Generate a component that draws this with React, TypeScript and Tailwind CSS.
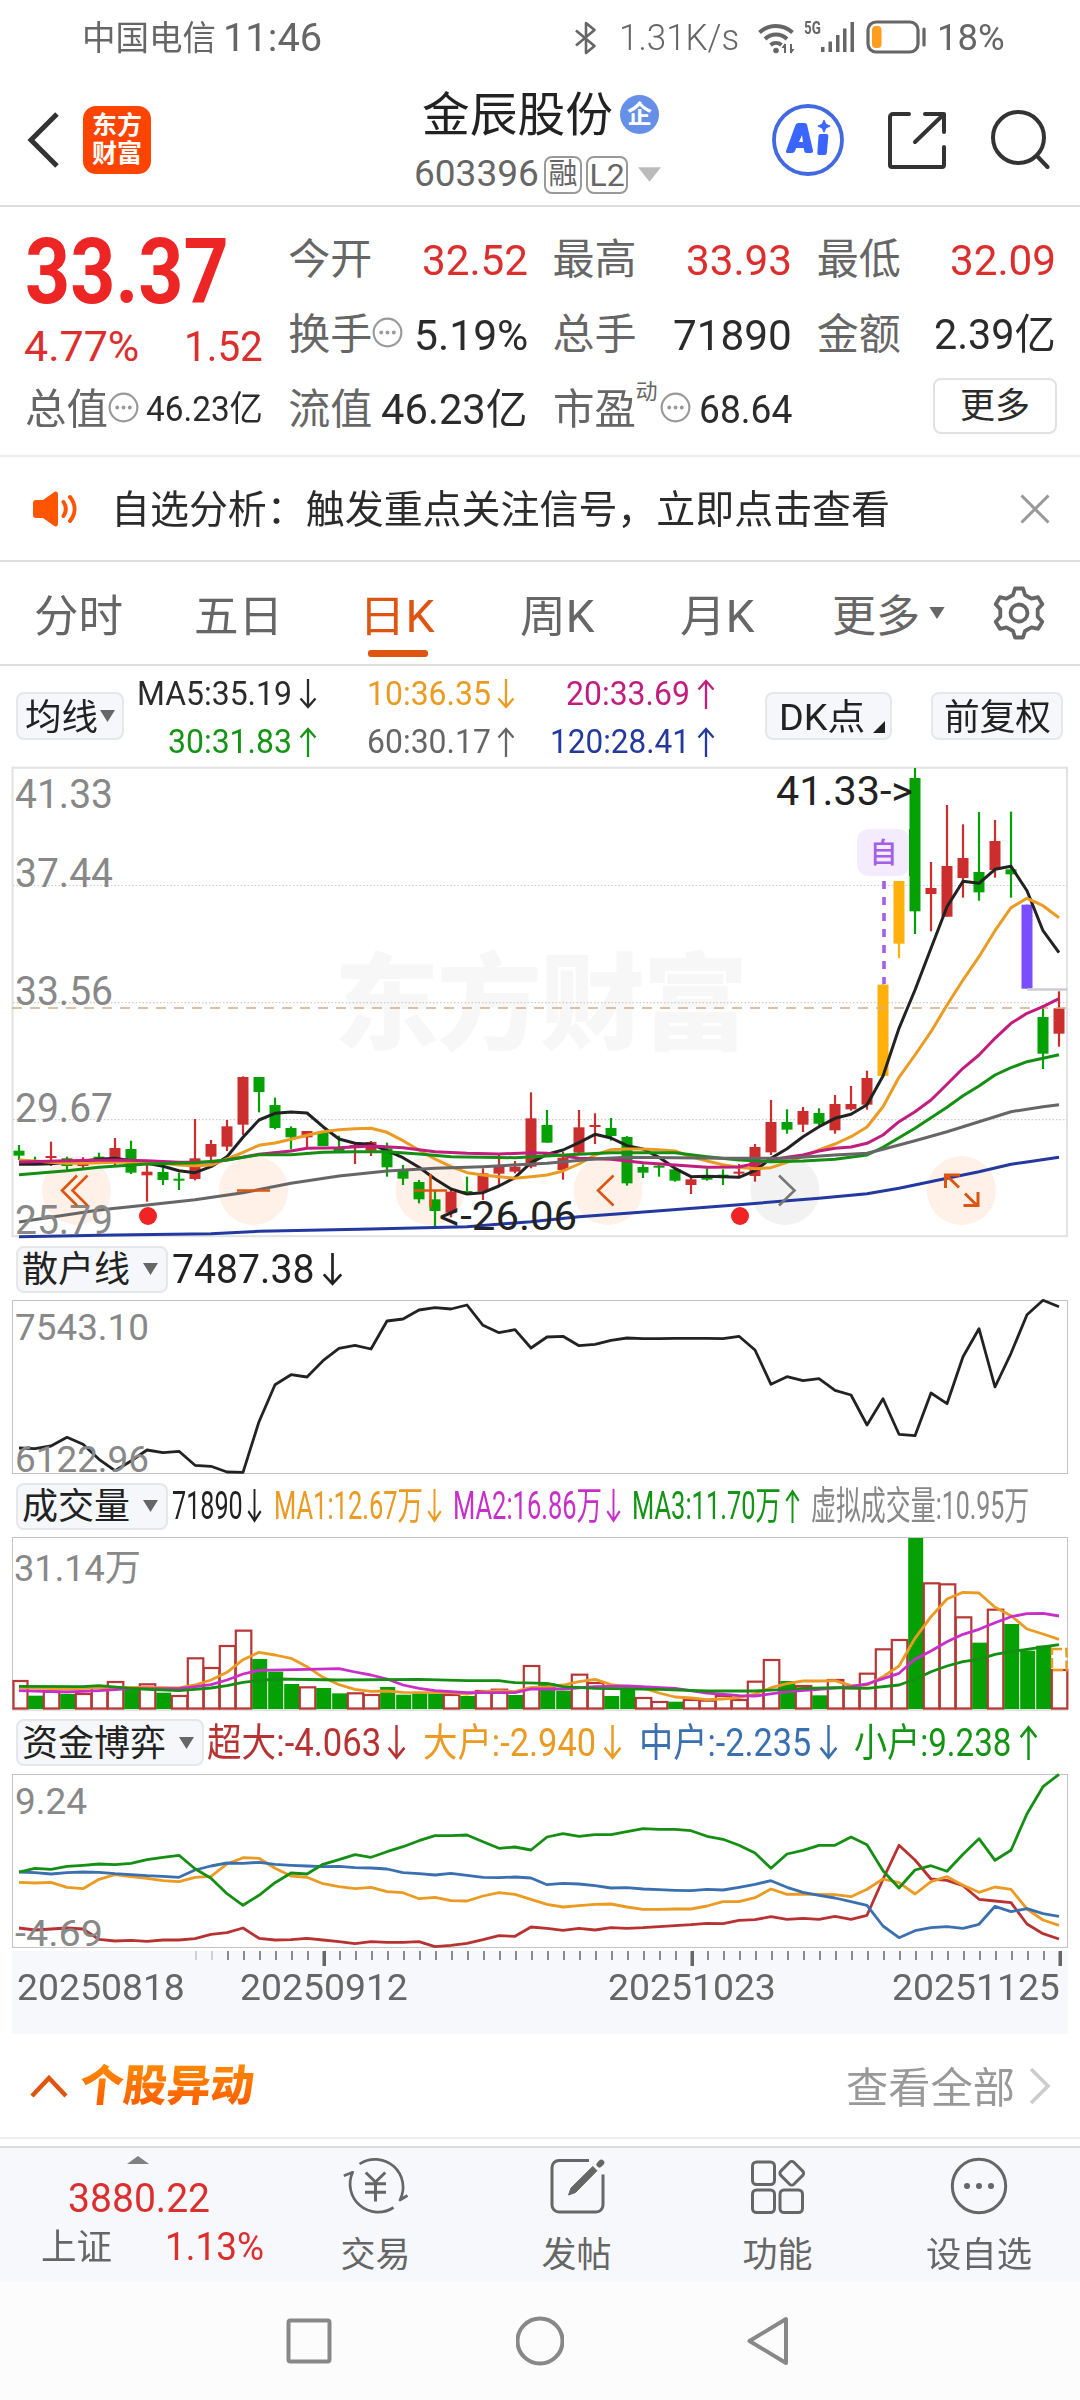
import { useLayoutEffect, useRef, useState } from 'react';
import type { ReactNode } from 'react';

/* ---------- text that is condensed or stretched to the width of its box ---------- */
function Fit({ className, children }: { className: string; children: ReactNode }) {
  const box = useRef<HTMLDivElement>(null);
  const text = useRef<HTMLSpanElement>(null);
  const [scale, setScale] = useState(1);
  useLayoutEffect(() => {
    if (box.current && text.current && text.current.offsetWidth > 0) {
      setScale(box.current.clientWidth / text.current.offsetWidth);
    }
  }, [children]);
  return (
    <div ref={box} className={`flex shrink-0 ${className}`}>
      <span ref={text} className="block origin-left whitespace-nowrap leading-[1.15]" style={{ transform: `scaleX(${scale})` }}>
        {children}
      </span>
    </div>
  );
}

/* ---------- chart helpers ---------- */
const X0 = 19;
const STEP = 16;
const xAt = (i: number) => X0 + i * STEP;
const third = (v: number) => v / 3;
type Pair = [number, number];

const series = (ys: number[]) => ys.map((v, i) => `${xAt(i)},${third(v).toFixed(1)}`).join(' ');
const sparse = (ps: Pair[]) => ps.map(([i, v]) => `${xAt(i)},${third(v).toFixed(1)}`).join(' ');

function Line({ points, color, width = 3 }: { points: string; color: string; width?: number }) {
  return <polyline points={points} fill="none" stroke={color} strokeWidth={width} strokeLinejoin="round" />;
}

function Label({ x, y, w, size, fill = '#888888', children }: { x: number; y: number; w: number; size: number; fill?: string; children: string }) {
  return (
    <text x={x} y={y} fontSize={size} fill={fill} textLength={w} lengthAdjust="spacingAndGlyphs">
      {children}
    </text>
  );
}

const RED = '#cc2e2e';
const GREEN = '#04a004';
const candleColor: Record<string, string> = { r: RED, g: GREEN, o: '#ffb00b', p: '#7a4dff' };

/* kind, high, body top, body bottom, low */
const candles: [string, number, number, number, number][] = [
  ['g', 1155, 1172, 1187, 1200], ['g', 1190, 1200, 1206, 1212], ['r', 1145, 1188, 1194, 1218], ['g', 1190, 1195, 1218, 1230],
  ['r', 1192, 1205, 1218, 1225], ['g', 1178, 1190, 1195, 1200], ['r', 1134, 1164, 1195, 1215], ['g', 1142, 1167, 1238, 1242],
  ['r', 1210, 1235, 1246, 1325], ['g', 1220, 1236, 1260, 1275], ['g', 1238, 1256, 1262, 1290], ['r', 1077, 1195, 1257, 1261],
  ['r', 1140, 1152, 1190, 1200], ['r', 1080, 1099, 1160, 1173], ['r', 949, 951, 1094, 1125], ['g', 951, 951, 996, 1057],
  ['g', 1013, 1035, 1104, 1108], ['g', 1099, 1104, 1132, 1168], ['r', 1113, 1113, 1132, 1162], ['g', 1115, 1115, 1158, 1158],
  ['g', 1127, 1165, 1175, 1178], ['r', 1150, 1155, 1160, 1212], ['r', 1143, 1146, 1172, 1188], ['g', 1148, 1165, 1222, 1250],
  ['g', 1215, 1228, 1256, 1275], ['g', 1260, 1266, 1318, 1330], ['g', 1290, 1318, 1353, 1398], ['r', 1290, 1295, 1358, 1372],
  ['g', 1250, 1293, 1298, 1300], ['r', 1225, 1240, 1295, 1320], ['r', 1185, 1218, 1241, 1275], ['r', 1203, 1220, 1235, 1240],
  ['r', 997, 1075, 1220, 1225], ['g', 1050, 1095, 1148, 1148], ['r', 1175, 1193, 1230, 1259], ['r', 1050, 1102, 1178, 1180],
  ['r', 1060, 1095, 1101, 1152], ['g', 1074, 1104, 1128, 1142], ['g', 1128, 1131, 1270, 1277], ['g', 1213, 1221, 1238, 1254],
  ['g', 1210, 1217, 1222, 1250], ['g', 1225, 1228, 1262, 1265], ['r', 1250, 1258, 1275, 1302], ['g', 1225, 1253, 1258, 1262],
  ['g', 1228, 1244, 1248, 1275], ['r', 1212, 1235, 1239, 1250], ['r', 1152, 1161, 1248, 1265], ['r', 1020, 1086, 1177, 1185],
  ['g', 1048, 1086, 1109, 1121], ['r', 1041, 1053, 1094, 1116], ['g', 1045, 1059, 1091, 1095], ['r', 1005, 1032, 1111, 1121],
  ['r', 978, 1032, 1048, 1052], ['r', 932, 954, 1034, 1049], ['o', 672, 674, 948, 948], ['o', 363, 363, 551, 594],
  ['g', 24, 54, 454, 522], ['r', 306, 384, 402, 514], ['r', 135, 318, 470, 470], ['r', 193, 294, 354, 413],
  ['g', 156, 336, 397, 422], ['r', 180, 243, 330, 353], ['g', 155, 328, 343, 413], ['p', 434, 434, 686, 686],
  ['g', 735, 771, 881, 927], ['r', 694, 745, 821, 860],
];

const ma5 = [
  1213, 1213, 1211, 1207, 1203, 1198, 1195, 1202, 1210, 1219, 1232, 1238, 1220, 1190, 1132, 1080, 1060, 1056, 1059, 1100, 1137, 1150,
  1153, 1172, 1193, 1222, 1257, 1287, 1302, 1298, 1278, 1253, 1208, 1183, 1170, 1148, 1123, 1134, 1157, 1167, 1192, 1225, 1250, 1249,
  1250, 1252, 1232, 1195, 1166, 1130, 1100, 1075, 1063, 1034, 948, 805, 690, 565, 440, 364, 370, 328, 319, 392, 512, 578,
];
const ma10 = [
  1200, 1203, 1207, 1210, 1210, 1208, 1207, 1206, 1207, 1210, 1215, 1217, 1215, 1197, 1177, 1156, 1149, 1138, 1126, 1115, 1109, 1106,
  1105, 1117, 1142, 1170, 1197, 1220, 1238, 1245, 1250, 1255, 1250, 1245, 1233, 1212, 1185, 1169, 1167, 1167, 1169, 1173, 1190, 1203,
  1214, 1222, 1226, 1223, 1207, 1190, 1170, 1152, 1130, 1101, 1040, 952, 885, 815, 735, 660, 590, 512, 443, 415, 437, 473,
];
const ma20: Pair[] = [
  [0, 1206], [3, 1202], [6, 1200], [8, 1202], [10, 1207], [12, 1206], [13, 1200], [15, 1183], [17, 1173], [18, 1165], [20, 1163],
  [22, 1158], [24, 1163], [26, 1175], [28, 1180], [30, 1182], [32, 1178], [33, 1180], [34, 1187], [35, 1195], [37, 1198], [39, 1208],
  [41, 1215], [43, 1222], [45, 1221], [47, 1200], [48, 1192], [49, 1185], [50, 1173], [51, 1165], [52, 1161], [53, 1150], [54, 1125],
  [55, 1085], [56, 1055], [57, 1020], [58, 973], [59, 925], [60, 885], [61, 835], [62, 790], [63, 760], [64, 740], [65, 716],
];
const ma30: Pair[] = [
  [0, 1244], [3, 1232], [5, 1222], [8, 1212], [11, 1208], [13, 1200], [15, 1184], [17, 1184], [19, 1177], [21, 1175], [23, 1175],
  [25, 1182], [27, 1190], [29, 1192], [31, 1193], [33, 1188], [35, 1183], [37, 1178], [39, 1178], [41, 1178], [43, 1190], [45, 1200],
  [47, 1205], [49, 1203], [51, 1198], [53, 1185], [54, 1162], [55, 1133], [56, 1105], [57, 1073], [58, 1042], [59, 1007], [60, 978],
  [61, 945], [62, 923], [63, 905], [64, 895], [65, 884],
];
const ma60: Pair[] = [
  [0, 1386], [5, 1350], [8, 1335], [11, 1319], [14, 1298], [17, 1270], [20, 1248], [23, 1233], [26, 1225], [29, 1220], [33, 1210],
  [36, 1197], [38, 1192], [44, 1195], [48, 1195], [51, 1185], [53, 1180], [54, 1168], [56, 1142], [58, 1115], [60, 1085], [62, 1055],
  [64, 1040], [65, 1034],
];
const ma120: Pair[] = [
  [0, 1430], [6, 1425], [12, 1421], [15, 1414], [22, 1407], [28, 1400], [32, 1385], [35, 1370], [38, 1360], [45, 1334], [50, 1315],
  [53, 1301], [55, 1285], [58, 1255], [60, 1235], [62, 1213], [63, 1206], [65, 1192],
];

/* retail-investor line */
const retail = [
  654, 656, 648, 622, 643, 688, 722, 693, 660, 668, 664, 706, 709, 726, 727, 575, 464, 434, 441, 392, 355, 346, 357, 273, 267, 240, 233,
  237, 225, 286, 308, 299, 354, 321, 319, 347, 343, 331, 324, 326, 326, 325, 325, 325, 326, 319, 360, 463, 440, 452, 446, 481, 495, 585,
  506, 613, 617, 489, 521, 380, 296, 471, 370, 254, 211, 230,
];

/* volume: r = rising (outlined) day, g = falling (solid) day; value is the bar's top */
const volume: [string, number][] = [
  ['r', 273], ['g', 317], ['r', 305], ['g', 312], ['r', 312], ['r', 292], ['r', 276], ['g', 300], ['r', 283], ['g', 308], ['r', 318],
  ['r', 205], ['r', 234], ['r', 168], ['r', 122], ['g', 207], ['g', 245], ['g', 282], ['r', 292], ['g', 294], ['g', 310], ['r', 310],
  ['r', 315], ['g', 291], ['g', 314], ['g', 310], ['g', 312], ['r', 315], ['g', 318], ['r', 303], ['r', 299], ['g', 315], ['r', 228],
  ['g', 280], ['g', 302], ['r', 254], ['r', 279], ['g', 318], ['g', 297], ['r', 324], ['r', 336], ['g', 335], ['r', 330], ['r', 332],
  ['r', 318], ['r', 330], ['r', 275], ['r', 210], ['g', 273], ['r', 288], ['g', 316], ['r', 270], ['r', 295], ['r', 251], ['r', 178],
  ['r', 150], ['g', -156], ['r', -20], ['r', -17], ['r', 82], ['g', 158], ['r', 59], ['g', 102], ['g', 182], ['g', 167], ['r', 240],
];
const vol1: Pair[] = [
  [0, 293], [3, 297], [5, 293], [8, 292], [10, 294], [11, 285], [12, 270], [13, 247], [14, 209], [15, 187], [16, 195], [17, 205],
  [18, 230], [19, 262], [20, 284], [21, 298], [22, 304], [23, 303], [24, 307], [27, 308], [28, 312], [29, 305], [30, 302], [31, 305],
  [32, 292], [33, 291], [34, 285], [35, 275], [36, 268], [37, 284], [38, 290], [39, 294], [40, 309], [41, 321], [42, 324], [43, 329],
  [44, 327], [45, 323], [46, 312], [47, 293], [48, 281], [49, 273], [50, 273], [51, 272], [52, 287], [53, 285], [54, 260], [55, 228],
  [56, 145], [57, 80], [58, 27], [59, 7], [60, 9], [61, 52], [62, 77], [63, 117], [64, 132], [65, 148],
];
const vol2: Pair[] = [
  [0, 302], [3, 306], [5, 302], [7, 296], [10, 296], [12, 284], [13, 270], [14, 252], [15, 241], [18, 238], [20, 236], [21, 246],
  [22, 255], [23, 267], [24, 285], [25, 295], [26, 302], [28, 308], [31, 308], [32, 297], [34, 297], [36, 290], [38, 288], [41, 295],
  [43, 309], [45, 317], [46, 318], [48, 305], [50, 298], [52, 290], [53, 282], [54, 266], [55, 250], [56, 208], [57, 183], [58, 155],
  [59, 133], [60, 118], [61, 98], [62, 80], [63, 71], [64, 70], [65, 78],
];
const vol3: Pair[] = [
  [0, 289], [4, 290], [5, 287], [7, 295], [8, 298], [10, 302], [12, 294], [13, 287], [14, 277], [16, 267], [20, 270], [25, 268],
  [28, 272], [30, 272], [31, 278], [33, 280], [34, 290], [36, 295], [40, 298], [43, 303], [46, 303], [49, 295], [51, 293], [53, 295],
  [55, 285], [56, 268], [57, 245], [58, 228], [59, 215], [60, 208], [61, 193], [62, 185], [63, 178], [64, 171], [65, 164],
];

/* capital flow */
const flowSmall = [
  846, 835, 838, 829, 826, 822, 824, 820, 809, 802, 796, 836, 865, 911, 946, 916, 878, 849, 852, 823, 809, 794, 802, 785, 770, 752, 737,
  737, 735, 755, 775, 771, 780, 741, 731, 739, 734, 734, 725, 716, 718, 718, 722, 739, 748, 766, 789, 835, 792, 781, 766, 766, 741, 764,
  842, 894, 840, 827, 844, 793, 746, 811, 781, 671, 590, 553,
];
const flowMid = [
  846, 848, 852, 848, 846, 847, 851, 854, 857, 859, 862, 840, 828, 819, 820, 817, 823, 826, 828, 830, 829, 833, 834, 837, 848, 851, 855,
  850, 856, 862, 863, 861, 864, 884, 880, 882, 887, 894, 893, 897, 899, 901, 902, 898, 900, 892, 883, 872, 892, 907, 916, 924, 935, 946,
  1008, 1043, 1022, 1013, 1010, 1015, 1003, 949, 965, 956, 971, 979,
];
const flowLarge = [
  877, 879, 877, 892, 896, 868, 854, 860, 865, 872, 875, 862, 859, 822, 803, 805, 835, 858, 862, 881, 890, 896, 892, 905, 908, 926, 922,
  932, 933, 918, 908, 913, 928, 943, 951, 947, 943, 942, 951, 958, 958, 957, 957, 948, 935, 935, 923, 897, 913, 912, 913, 914, 920, 898,
  867, 878, 912, 875, 860, 886, 907, 891, 898, 957, 990, 1006,
];
const flowSuper = [
  1014, 1020, 1017, 1014, 1017, 1048, 1053, 1051, 1054, 1050, 1050, 1046, 1033, 1028, 1014, 1045, 1050, 1049, 1045, 1050, 1055, 1061,
  1055, 1057, 1057, 1055, 1070, 1066, 1060, 1049, 1037, 1039, 1011, 1015, 1021, 1015, 1020, 1013, 1015, 1013, 1010, 1007, 1004, 1000,
  1001, 991, 989, 980, 988, 985, 988, 979, 988, 976, 868, 766, 810, 867, 871, 887, 928, 933, 938, 1002, 1031, 1047,
];

/* ---------- small drawings ---------- */
function Arrow({ up = false, className }: { up?: boolean; className: string }) {
  return (
    <svg viewBox="0 0 18 30" preserveAspectRatio="none" className={`shrink-0 ${up ? '' : 'rotate-180'} ${className}`} fill="none" stroke="currentColor" strokeWidth="2.3">
      <path d="M9 30V2M1.500 10.500 9 2l7.500 8.500" />
    </svg>
  );
}

function Caret({ className }: { className: string }) {
  return (
    <svg viewBox="0 0 14 11" className={`shrink-0 ${className}`} fill="currentColor">
      <path d="M0 0h14L7 11z" />
    </svg>
  );
}

function Dots({ className = '' }: { className?: string }) {
  return (
    <svg viewBox="0 0 32 32" className={`h-[31px] w-[31px] shrink-0 ${className}`} fill="none" stroke="#999999" strokeWidth="2.200">
      <circle cx="16" cy="16" r="14.300" />
      <g fill="#999999" stroke="none">
        <circle cx="9.500" cy="16" r="2" />
        <circle cx="16" cy="16" r="2" />
        <circle cx="22.500" cy="16" r="2" />
      </g>
    </svg>
  );
}

function StatusBar() {
  return (
    <div className="flex h-[76px] items-center pl-[82px] text-[#666666]">
      <Fit className="mt-[2px] w-[134px] text-[34px]">中国电信</Fit>
      <Fit className="ml-[7px] mt-[1px] w-[99px] text-[39px]">11:46</Fit>
      <svg viewBox="0 0 24 34" className="ml-[252px] h-[34px] w-[24px]" fill="none" stroke="currentColor" strokeWidth="2.600" strokeLinejoin="round">
        <path d="M2 9.500 20.500 25 12 32V2l8.500 7L2 24.500" />
      </svg>
      <Fit className="ml-[21px] mt-[1px] w-[120px] text-[37px] font-light">1.31K/s</Fit>
      <svg viewBox="0 0 38 34" className="ml-[19px] h-[34px] w-[38px]" fill="none" stroke="currentColor" strokeWidth="4">
        <path d="M1.500 11.500a24 24 0 0 1 33 0M7 18a16 16 0 0 1 22 0M12.500 24a8.500 8.500 0 0 1 11 0" />
        <circle cx="18" cy="29.500" r="2.800" fill="currentColor" stroke="none" />
        <path d="M27 32v-9M33 23v9" strokeWidth="2" />
        <path d="m23.500 27 3.500-5v5zM36.500 28 33 33v-5z" fill="currentColor" stroke="none" />
      </svg>
      <Fit className="mb-[20px] ml-[8px] w-[17px] text-[19px] font-bold">5G</Fit>
      <svg viewBox="0 0 34 32" className="mt-[-2px] h-[32px] w-[34px]" fill="currentColor">
        <path d="M0 26h3.500v5H0zM7.500 20.500H11V31H7.500zM15 14h3.500v17H15zM22 7.500h3.500V31H22zM29.500 1H33v30h-3.500z" />
      </svg>
      <svg viewBox="0 0 60 34" className="ml-[11px] mt-[-3px] h-[34px] w-[60px]" fill="none" stroke="currentColor" strokeWidth="3.200">
        <rect x="2" y="2" width="50" height="30" rx="8" />
        <rect x="6" y="6" width="9.500" height="22" rx="4" fill="#ff9d1e" stroke="none" />
        <path d="M58 9v16" strokeLinecap="round" />
      </svg>
      <Fit className="ml-[11px] mt-[1px] w-[68px] text-[37px]">18%</Fit>
    </div>
  );
}

function Header() {
  return (
    <div className="flex h-[131px] items-center border-b-2 border-[#dddddd] pb-[2px] pl-[26px]">
      <svg viewBox="0 0 34 56" className="h-[56px] w-[34px]" fill="none" stroke="#333333" strokeWidth="5">
        <path d="M31 2 5 28l26 26" />
      </svg>
      <div className="ml-[23px] flex h-[68px] w-[68px] flex-col items-center justify-center rounded-[13px] bg-[#ff4400] text-[25px] font-bold leading-[28px] text-white">
        <span>东方</span>
        <span>财富</span>
      </div>
      <div className="ml-[263px] mt-[4px] flex w-[250px] flex-col">
        <div className="flex h-[50px] items-center pl-[8px]">
          <Fit className="mt-[2px] w-[191px] text-[47px] text-[#222222]">金辰股份</Fit>
          <span className="ml-[7px] flex h-[39px] w-[39px] items-center justify-center rounded-full bg-[#6690e8] text-[25px] font-bold leading-none text-white">企</span>
        </div>
        <div className="mt-[16px] flex h-[39px] items-center text-[#666666]">
          <Fit className="w-[125px] text-[37px]">603396</Fit>
          <span className="ml-[5px] flex h-[38px] w-[38px] items-center justify-center rounded-[8px] border-2 border-[#999999] text-[29px] leading-none">融</span>
          <span className="ml-[4px] flex h-[38px] w-[42px] items-center justify-center rounded-[8px] border-2 border-[#999999] text-[32px] leading-none">L2</span>
          <svg viewBox="0 0 24 15" className="ml-[10px] h-[15px] w-[23px]" fill="#bbbbbb">
            <path d="M0 0h24L12 15z" />
          </svg>
        </div>
      </div>
      <svg viewBox="0 0 72 72" className="ml-[108px] h-[72px] w-[72px]" fill="#3a66ff">
        <circle cx="36" cy="36" r="34" fill="none" stroke="#4169e1" strokeWidth="3.800" />
        <path fillRule="evenodd" d="M14 47l9.500-26q.8-2 3-2h6q2.200 0 2.600 2L41 46.500q.3 2.500-2 2.500h-4.500q-2 0-2.300-2l-.5-3h-7.500l-1.200 3q-.8 2-3 2h-4q-2.500 0-2-2zM27 38h4l-1-7z" />
        <path d="M48.500 30h6q2 0 1.800 2l-1.500 17q-.2 2-2.200 2h-5.500q-2 0-1.800-2l1.200-17q.2-2 2-2z" />
        <path d="m52 16 1.900 4.200 4.200 1.900-4.200 1.900-1.900 4.200-1.900-4.200-4.200-1.900 4.200-1.900z" stroke="#3a66ff" strokeLinejoin="round" />
      </svg>
      <svg viewBox="0 0 60 60" className="ml-[43px] h-[60px] w-[60px]" fill="none" stroke="#333333" strokeWidth="4" strokeLinecap="round" strokeLinejoin="round">
        <path d="M22 4H6a3 3 0 0 0-3 3v48a2 2 0 0 0 2 2h50a2 2 0 0 0 2-2V37M38 4h19v18M56 5 28 32" />
      </svg>
      <svg viewBox="0 0 60 60" className="ml-[43px] h-[60px] w-[60px]" fill="none" stroke="#333333" strokeWidth="4" strokeLinecap="round">
        <circle cx="28.500" cy="27.500" r="25.500" />
        <path d="m47 46 10.500 11" />
      </svg>
    </div>
  );
}

function Quote() {
  return (
    <div className="grid h-[250px] grid-cols-4 gap-x-[26px] border-b-2 border-[#eeeeee] pl-[25px] pr-[24px] pt-[16px] text-[42px] text-[#2b2b2b]">
      <div className="flex h-[225px] flex-col">
        <Fit className="mt-[-2px] w-[204px] text-[90px] font-bold text-[#ee2525]">33.37</Fit>
        <div className="mt-[-3px] flex justify-between text-[43px] text-[#dd2e2e]">
          <Fit className="ml-[-1px] w-[115px]">4.77%</Fit>
          <Fit className="w-[79px]">1.52</Fit>
        </div>
        <div className="mb-0 mt-auto flex h-[75px] items-center">
          <Fit className="w-[83px] text-[#666666]">总值</Fit>
          <Dots className="mb-[6px]" />
          <Fit className="ml-auto w-[117px] text-[35px]">46.23亿</Fit>
        </div>
      </div>

      <div className="flex flex-col">
        <div className="flex h-[75px] items-center justify-between">
          <Fit className="ml-[-1px] w-[84px] text-[#666666]">今开</Fit>
          <Fit className="w-[106px] text-[43px] text-[#dd2e2e]">32.52</Fit>
        </div>
        <div className="flex h-[75px] items-center">
          <Fit className="ml-[-1px] w-[84px] text-[#666666]">换手</Fit>
          <Dots className="mb-[6px]" />
          <Fit className="ml-auto w-[114px] text-[43px]">5.19%</Fit>
        </div>
        <div className="flex h-[75px] items-center justify-between">
          <Fit className="ml-[-1px] w-[84px] text-[#666666]">流值</Fit>
          <Fit className="w-[147px]">46.23亿</Fit>
        </div>
      </div>

      <div className="flex flex-col">
        <div className="flex h-[75px] items-center justify-between">
          <Fit className="ml-[-1px] w-[84px] text-[#666666]">最高</Fit>
          <Fit className="w-[106px] text-[43px] text-[#dd2e2e]">33.93</Fit>
        </div>
        <div className="flex h-[75px] items-center justify-between">
          <Fit className="ml-[-1px] w-[84px] text-[#666666]">总手</Fit>
          <Fit className="w-[119px] text-[43px]">71890</Fit>
        </div>
        <div className="flex h-[75px] items-center">
          <Fit className="ml-[-1px] w-[83px] text-[#666666]">市盈</Fit>
          <span className="mb-[38px] text-[22px] leading-none text-[#666666]">动</span>
          <Dots className="mb-[6px] ml-[2px]" />
          <Fit className="ml-auto w-[93px] text-[38px]">68.64</Fit>
        </div>
      </div>

      <div className="flex flex-col">
        <div className="flex h-[75px] items-center justify-between">
          <Fit className="ml-[-1px] w-[84px] text-[#666666]">最低</Fit>
          <Fit className="w-[106px] text-[43px] text-[#dd2e2e]">32.09</Fit>
        </div>
        <div className="flex h-[75px] items-center justify-between">
          <Fit className="ml-[-1px] w-[84px] text-[#666666]">金额</Fit>
          <Fit className="w-[122px]">2.39亿</Fit>
        </div>
        <div className="flex h-[75px] items-center justify-end">
          <div className="mb-[9px] mr-[-1px] flex h-[56px] w-[124px] items-center justify-center rounded-[8px] border-2 border-[#e2e2e2] pt-[1px] text-[35px] leading-none">更多</div>
        </div>
      </div>
    </div>
  );
}

function Notice() {
  return (
    <div className="flex h-[105px] items-center border-b-2 border-[#dddddd] pl-[33px] pr-[30px]">
      <svg viewBox="0 0 46 38" className="h-[38px] w-[46px]">
        <path d="M3 10h7L21 2.200c2-1.400 4-.4 4 2v29.600c0 2.400-2 3.400-4 2L10 28H3c-2 0-3-1-3-3V13c0-2 1-3 3-3z" fill="#ff5500" />
        <path d="M30.500 12c3 4.500 3 9.500 0 14M37 7c6 7.500 6 16.500 0 24" fill="none" stroke="#ff5500" strokeWidth="4" strokeLinecap="round" />
      </svg>
      <Fit className="ml-[32px] mt-[3px] w-[779px] text-[39px] text-[#2b2b2b]">自选分析：触发重点关注信号，立即点击查看</Fit>
      <svg viewBox="0 0 30 30" className="ml-auto h-[30px] w-[30px]" fill="none" stroke="#999999" strokeWidth="3">
        <path d="m1.500 1.500 27 27m0-27-27 27" />
      </svg>
    </div>
  );
}

function PeriodTabs() {
  return (
    <div className="flex h-[104px] items-center border-b-2 border-[#dddddd] pl-[34px] text-[44px] text-[#666666]">
      <Fit className="mt-[8px] w-[89px]">分时</Fit>
      <Fit className="ml-[71px] mt-[8px] w-[89px]">五日</Fit>
      <div className="relative ml-[76px] flex h-full items-center text-[#dd5511]">
        <Fit className="mt-[8px] w-[76px]">日K</Fit>
        <span className="absolute bottom-[7px] left-[9px] h-[7px] w-[60px] rounded-[3px] bg-[#dd5511]" />
      </div>
      <Fit className="ml-[85px] mt-[8px] w-[75px]">周K</Fit>
      <Fit className="ml-[85px] mt-[8px] w-[75px]">月K</Fit>
      <Fit className="ml-[77px] mt-[8px] w-[88px]">更多</Fit>
      <Caret className="ml-[9px] h-[12px] w-[16px]" />
      <svg viewBox="0 0 52 54" className="ml-[48px] h-[54px] w-[52px]" fill="none" stroke="#666666" strokeWidth="3.800" strokeLinejoin="round">
        <path d="M22 2.500h8l2 6.500 6.500 3.700 6.600-1.500 4.200 7-4.600 5.100v7.400l4.600 5.100-4.200 7-6.600-1.500L32 45l-2 6.500h-8L20 45l-6.500-3.700-6.600 1.500-4.200-7 4.600-5.100v-7.400l-4.600-5.100 4.200-7 6.600 1.500L20 9z" />
        <circle cx="26" cy="27" r="8.500" />
      </svg>
    </div>
  );
}

function IndicatorBar() {
  return (
    <div className="flex h-[94px] items-center pl-[16px] pt-[10px]">
      <div className="mb-[4px] flex h-[48px] w-[108px] items-center rounded-[8px] border-2 border-[#e6e7eb] bg-[#f6f7fa] pl-[7px] text-[#222222]">
        <Fit className="mt-[5px] w-[73px] text-[36px]">均线</Fit>
        <Caret className="ml-[2px] h-[12px] w-[15px] text-[#666666]" />
      </div>
      <div className="ml-[13px] grid h-[96px] grid-cols-[180px_198px_200px] grid-rows-2 text-[34px]">
        <div className="flex items-center justify-end text-[#2b2b2b]">
          <Fit className="w-[155px]">MA5:35.19</Fit>
          <Arrow className="ml-[7px] h-[30px] w-[18px]" />
        </div>
        <div className="flex items-center justify-end text-[#eb9a22]">
          <Fit className="w-[124px]">10:36.35</Fit>
          <Arrow className="ml-[6px] h-[30px] w-[18px]" />
        </div>
        <div className="flex items-center justify-end text-[#c21c7c]">
          <Fit className="w-[124px]">20:33.69</Fit>
          <Arrow up className="ml-[7px] h-[30px] w-[18px]" />
        </div>
        <div className="flex items-center justify-end text-[#149414]">
          <Fit className="w-[124px]">30:31.83</Fit>
          <Arrow up className="ml-[7px] h-[30px] w-[18px]" />
        </div>
        <div className="flex items-center justify-end text-[#666666]">
          <Fit className="w-[124px]">60:30.17</Fit>
          <Arrow up className="ml-[6px] h-[30px] w-[18px]" />
        </div>
        <div className="flex items-center justify-end text-[#24399f]">
          <Fit className="w-[140px]">120:28.41</Fit>
          <Arrow up className="ml-[7px] h-[30px] w-[18px]" />
        </div>
      </div>
      <div className="relative mb-[4px] ml-[50px] flex h-[48px] w-[127px] items-center rounded-[8px] border-2 border-[#e6e7eb] bg-[#f6f7fa] pl-[12px] text-[#222222]">
        <Fit className="mt-[5px] w-[86px] text-[36px]">DK点</Fit>
        <svg viewBox="0 0 12 12" className="absolute bottom-[5px] right-[5px] h-[12px] w-[12px]" fill="#222222">
          <path d="M12 0v12H0z" />
        </svg>
      </div>
      <div className="mb-[4px] ml-[39px] flex h-[48px] w-[132px] items-center justify-center rounded-[8px] border-2 border-[#e6e7eb] bg-[#f6f7fa] text-[#222222]">
        <Fit className="mt-[5px] w-[107px] text-[36px]">前复权</Fit>
      </div>
    </div>
  );
}

const roundButtons = [76.5, 253.5, 430, 608, 785, 961.5];

function CandleChart() {
  return (
    <svg viewBox="0 0 1080 481" className="block h-[481px] w-full overflow-visible">
      <text x="334" y="281" fontSize="105" fontWeight="900" fill="#f7f7f7" textLength="414">东方财富</text>
      <rect x="12.500" y="7.700" width="1054.500" height="468.500" fill="none" stroke="#e2e2e2" strokeWidth="2" />
      <g stroke="#cccccc" strokeWidth="1.200" strokeDasharray="1.500 2">
        <path d="M13 125.500h1054M13 242.700h1054M13 359.700h1054" />
      </g>
      <Label x={15} y={47.500} w={98} size={40}>41.33</Label>
      <Label x={15} y={126.500} w={98} size={40}>37.44</Label>
      <Label x={15} y={244.500} w={98} size={40}>33.56</Label>
      <Label x={15} y={361.500} w={98} size={40}>29.67</Label>
      {roundButtons.map((cx, i) => (
        <circle key={cx} cx={cx} cy="430.500" r="34.500" fill={i === 4 ? '#f2f2f2' : '#fff0e8'} />
      ))}
      {candles.map(([kind, high, top, bottom, low], i) => (
        <g key={i} fill={candleColor[kind]}>
          <rect x={xAt(i) - 1.1} y={third(high)} width="2.200" height={third(low - high)} />
          <rect x={xAt(i) - 5.5} y={third(top)} width="11" height={Math.max(2, third(bottom - top))} />
        </g>
      ))}
      <path d="M12 248h1055" stroke="#d0ae86" strokeWidth="1.700" strokeDasharray="10 8" />
      <path d="M1027 229.500h40" stroke="#ccccd4" strokeWidth="2.600" />
      <Line points={series(ma5)} color="#222222" />
      <Line points={series(ma10)} color="#eb9a22" />
      <Line points={sparse(ma20)} color="#c21c7c" />
      <Line points={sparse(ma30)} color="#148f14" />
      <Line points={sparse(ma60)} color="#666666" />
      <Line points={sparse(ma120)} color="#24399f" />
      <Label x={15} y={474} w={98} size={40}>25.79</Label>
      <Label x={776} y={45} w={137} size={40} fill="#222222">{'41.33->'}</Label>
      <Label x={439} y={469.500} w={138} size={40} fill="#222222">{'<-26.06'}</Label>
      <rect x="857" y="69" width="53" height="47" rx="12" fill="#f4ebfe" />
      <rect x="909" y="69" width="5" height="47" fill={GREEN} />
      <text x="883.500" y="103" fontSize="28" fontWeight="500" fill="#a35fe8" textAnchor="middle">自</text>
      <path d="M884 121v103" stroke="#a35fe8" strokeWidth="3.600" strokeDasharray="8 8" />
      <circle cx="148" cy="456" r="9" fill="#f02424" />
      <circle cx="740" cy="456" r="9" fill="#f02424" />
      <g fill="none" stroke="#dd5511" strokeWidth="2.600">
        <path d="m77 415.500-15 15 15 15M87.500 415.500l-15 15 15 15M237 430.500h33M414 430.500h33M430.500 414v33M613.500 415.500l-15.500 15 15.500 15" />
        <path d="M959 427.500 947 416M945.500 428v-13H960M965 433.500l11.500 11.500M978 432v13.500h-14.500" strokeWidth="3" />
      </g>
      <path d="m779 415.500 15.500 15-15.500 15" fill="none" stroke="#777777" strokeWidth="2.600" />
    </svg>
  );
}

function RetailChart() {
  return (
    <svg viewBox="0 67 1080 180" className="block h-[180px] w-full overflow-visible">
      <rect x="12.500" y="70.500" width="1055" height="173" fill="none" stroke="#c4c4c4" />
      <Line points={series(retail)} color="#222222" width={2.8} />
      <Label x={15} y={110} w={134} size={37}>7543.10</Label>
      <Label x={15} y={241.500} w={134} size={37}>6122.96</Label>
    </svg>
  );
}

function VolumeChart() {
  const base = third(357);
  return (
    <svg viewBox="0 -57 1080 180" className="block h-[180px] w-full overflow-visible">
      <rect x="12.500" y="-52.500" width="1055" height="172.500" fill="none" stroke="#c4c4c4" />
      <Label x={14} y={-9} w={127} size={37}>31.14万</Label>
      {volume.map(([kind, top], i) =>
        kind === 'g' ? (
          <rect key={i} x={xAt(i) - 6.8} y={third(top)} width="15" height={base - third(top)} fill={GREEN} />
        ) : (
          <rect key={i} x={xAt(i) - (i === 0 ? 5.5 : 7.2)} y={third(top)} width={i === 0 ? 14 : 15.500} height={base - third(top) - 0.5} fill="#ffffff" stroke="#b83636" strokeWidth="2.200" />
        ),
      )}
      <rect x="1052" y="59" width="14.500" height="21" fill="none" stroke="#eb9a22" strokeWidth="2.400" strokeDasharray="10 3" />
      <Line points={sparse(vol1)} color="#eb9a22" width={2.8} />
      <Line points={sparse(vol2)} color="#c82fc8" width={2.8} />
      <Line points={sparse(vol3)} color="#148f14" width={2.8} />
    </svg>
  );
}

function FlowChart() {
  return (
    <svg viewBox="0 181 1080 180" className="block h-[180px] w-full overflow-visible">
      <rect x="12.500" y="184.500" width="1055" height="173" fill="none" stroke="#c4c4c4" />
      <Line points={series(flowSuper)} color="#b83232" width={2.8} />
      <Line points={series(flowLarge)} color="#eb9a22" width={2.8} />
      <Line points={series(flowMid)} color="#3a70b0" width={2.8} />
      <Line points={series(flowSmall)} color="#148f14" width={2.8} />
      <Label x={15} y={224} w={72} size={37}>9.24</Label>
      <Label x={15} y={356} w={88} size={37}>-4.69</Label>
    </svg>
  );
}

function TimeAxis() {
  const ticks = Array.from({ length: 55 }, (_, k) => k + 11);
  return (
    <div className="mx-[12px] flex h-[83px] flex-col bg-[#f7f8fb]">
      <svg viewBox="12 0 1056 16" className="block h-[16px] w-full">
        {ticks.map((i) =>
          [19, 42, 65].includes(i) ? (
            <rect key={i} x={xAt(i) - 0.5} y="0" width="3.500" height="15" fill="#666666" />
          ) : (
            <rect key={i} x={xAt(i)} y="0" width="2" height="9" fill={i < 13 ? '#d0d0d2' : '#8a8a8a'} />
          ),
        )}
      </svg>
      <div className="mt-[1px] flex text-[36px] text-[#666666]">
        <Fit className="ml-[5px] w-[168px]">20250818</Fit>
        <Fit className="ml-[55px] w-[168px]">20250912</Fit>
        <Fit className="ml-[200px] w-[168px]">20251023</Fit>
        <Fit className="ml-[116px] w-[168px]">20251125</Fit>
      </div>
    </div>
  );
}

function Picker({ className, children }: { className: string; children: ReactNode }) {
  return (
    <div className={`flex h-[47px] shrink-0 items-center rounded-[8px] border-2 border-[#e6e7eb] bg-[#f6f7fa] pl-[4px] text-[36px] leading-none text-[#222222] ${className}`}>
      <span className="mt-[2px] whitespace-nowrap">{children}</span>
      <Caret className="ml-auto mr-[8px] h-[12px] w-[15px] text-[#666666]" />
    </div>
  );
}

function MoversRow() {
  return (
    <div className="flex h-[105px] items-center border-b-2 border-[#eeeeee] pl-[30px] pr-[29px]">
      <svg viewBox="0 0 38 24" className="h-[24px] w-[38px]" fill="none" stroke="#dd5511" strokeWidth="4.500">
        <path d="M2 22 19 4l17 18" />
      </svg>
      <div className="ml-[12px] mt-[3px] w-[182px] -skew-x-6 bg-gradient-to-b from-[#ff8a00] to-[#ff5500] bg-clip-text text-[43.5px] font-black leading-[48px] text-transparent">个股异动</div>
      <Fit className="ml-auto mt-[8px] w-[169px] text-[42px] text-[#999999]">查看全部</Fit>
      <svg viewBox="0 0 22 38" className="ml-[14px] h-[38px] w-[22px]" fill="none" stroke="#cccccc" strokeWidth="3.500">
        <path d="m2 2 17 17L2 36" />
      </svg>
    </div>
  );
}

function TabItem({ label, labelClass, children }: { label: string; labelClass: string; children: ReactNode }) {
  return (
    <div className="flex w-[201px] flex-col items-center">
      <svg viewBox="0 0 66 60" className="mt-[9px] h-[60px] w-[66px]" fill="none" stroke="#666666" strokeWidth="3">
        {children}
      </svg>
      <Fit className={`mt-[19px] text-[35px] ${labelClass}`}>{label}</Fit>
    </div>
  );
}

function TabBar() {
  return (
    <div className="mt-[7px] flex h-[136px] border-t-2 border-[#dcdcdc] bg-[#f7f8fb] text-[#666666]">
      <div className="flex w-[275px] flex-col">
        <svg viewBox="0 0 22 8" className="ml-[127px] mt-[8px] h-[8px] w-[22px]" fill="#808080">
          <path d="M0 8 11 0l11 8z" />
        </svg>
        <Fit className="ml-[68px] mt-[11px] w-[142px] text-[41px] text-[#dd2e2e]">3880.22</Fit>
        <div className="mt-[4px] flex items-center">
          <Fit className="ml-[41px] mt-[1px] w-[71px] text-[36px]">上证</Fit>
          <Fit className="ml-[53px] w-[99px] text-[38px] text-[#dd2e2e]">1.13%</Fit>
        </div>
      </div>
      <TabItem label="交易" labelClass="w-[70px]">
        <g strokeLinejoin="round">
          <path d="M16.500 7A28 28 0 0 1 57 43l7.500-4.500M50.500 50.500A28 28 0 0 1 9.700 15.300L.8 18.700" strokeWidth="2.700" />
        </g>
        <path d="m22.700 15.500 9.800 9.500 9.800-9.500M32.500 24v20.500M22 26.700h21M22 35.300h21" />
      </TabItem>
      <TabItem label="发帖" labelClass="w-[70px]">
        <path d="M45 3.500H15a7 7 0 0 0-7 7V48a7 7 0 0 0 7 7h37a7 7 0 0 0 7-7V17.500" />
        <path d="M24.500 38 27 31 48.800 9.500l4.200 4.200L31.500 35.500z" fill="#666666" strokeWidth="1" strokeLinejoin="round" />
        <path d="m55.500 7.500 1.800-1.800" strokeWidth="6" strokeLinecap="round" />
      </TabItem>
      <TabItem label="功能" labelClass="w-[70px]">
        <rect x="7.500" y="5" width="22" height="22.500" rx="4" />
        <rect x="7.500" y="33" width="22" height="22.500" rx="4" />
        <rect x="35" y="33" width="22.500" height="22.500" rx="4" />
        <rect x="37.500" y="7" width="18.500" height="18.500" rx="3" transform="rotate(45 46.750 16.250)" />
      </TabItem>
      <TabItem label="设自选" labelClass="w-[106px]">
        <circle cx="33" cy="29" r="26.700" />
        <g fill="#666666" stroke="none">
          <circle cx="21" cy="29" r="3" />
          <circle cx="33" cy="29" r="3" />
          <circle cx="45" cy="29" r="3" />
        </g>
      </TabItem>
    </div>
  );
}

function SystemNav() {
  return (
    <div className="flex h-[118px] items-center gap-[183px] bg-[#fcfcfc] pl-[285px]">
      <svg viewBox="0 0 48 48" className="h-[48px] w-[48px]" fill="none" stroke="#888888" strokeWidth="4">
        <rect x="3.500" y="3.500" width="41" height="41" rx="2" />
      </svg>
      <svg viewBox="0 0 48 50" className="h-[50px] w-[48px]" fill="none" stroke="#888888" strokeWidth="4">
        <circle cx="24" cy="25" r="22.500" />
      </svg>
      <svg viewBox="0 0 48 50" className="ml-[-2px] h-[50px] w-[48px]" fill="none" stroke="#888888" strokeWidth="4" strokeLinejoin="round">
        <path d="M41 3v44L4.500 25z" />
      </svg>
    </div>
  );
}

export default function App() {
  return (
    <div className="flex h-[2400px] w-[1080px] flex-col overflow-hidden bg-white font-[Roboto,'Noto_Sans_CJK_SC',sans-serif]">
      <StatusBar />
      <Header />
      <Quote />
      <Notice />
      <PeriodTabs />
      <IndicatorBar />
      <CandleChart />

      <div className="flex h-[56px] items-center pl-[16px] text-[#222222]">
        <Picker className="w-[152px]">散户线</Picker>
        <Fit className="ml-[4px] mt-[1px] w-[142px] text-[40px]">7487.38</Fit>
        <Arrow className="ml-[8px] h-[33px] w-[21px]" />
      </div>
      <RetailChart />

      <div className="flex h-[56px] items-center pl-[16px] pt-[2px] text-[39px]">
        <Picker className="w-[152px]">成交量</Picker>
        <Fit className="ml-[4px] w-[71px] text-[#222222]">71890</Fit>
        <Arrow className="ml-[4px] h-[34px] w-[15px] text-[#222222]" />
        <Fit className="ml-[12px] w-[149px] text-[#eb9a22]">MA1:12.67万</Fit>
        <Arrow className="ml-[4px] h-[34px] w-[15px] text-[#eb9a22]" />
        <Fit className="ml-[11px] w-[149px] text-[#c82fc8]">MA2:16.86万</Fit>
        <Arrow className="ml-[4px] h-[34px] w-[15px] text-[#c82fc8]" />
        <Fit className="ml-[11px] w-[149px] text-[#149414]">MA3:11.70万</Fit>
        <Arrow up className="ml-[4px] h-[34px] w-[15px] text-[#149414]" />
        <Fit className="ml-[11px] w-[218px] text-[#888888]">虚拟成交量:10.95万</Fit>
      </div>
      <VolumeChart />

      <div className="flex h-[58px] items-center pl-[16px] pt-[1px] text-[39px]">
        <Picker className="w-[188px]">资金博弈</Picker>
        <Fit className="ml-[3px] mt-[1px] w-[174px] text-[#b83232]">超大:-4.063</Fit>
        <Arrow className="ml-[6px] h-[35px] w-[19px] text-[#b83232]" />
        <Fit className="ml-[17px] mt-[1px] w-[173px] text-[#eb9a22]">大户:-2.940</Fit>
        <Arrow className="ml-[7px] h-[35px] w-[19px] text-[#eb9a22]" />
        <Fit className="ml-[17px] mt-[1px] w-[172px] text-[#3a70b0]">中户:-2.235</Fit>
        <Arrow className="ml-[8px] h-[35px] w-[19px] text-[#3a70b0]" />
        <Fit className="ml-[16px] mt-[1px] w-[157px] text-[#149414]">小户:9.238</Fit>
        <Arrow up className="ml-[8px] h-[35px] w-[19px] text-[#149414]" />
      </div>
      <FlowChart />
      <TimeAxis />

      <MoversRow />
      <TabBar />
      <SystemNav />
    </div>
  );
}
